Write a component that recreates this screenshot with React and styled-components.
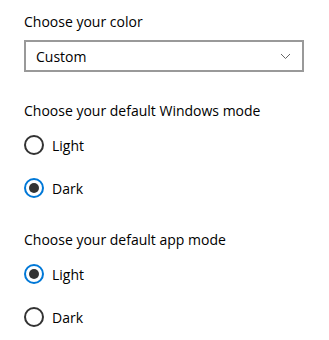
import React, { useState } from "react";
import styled, { createGlobalStyle } from "styled-components";

const Global = createGlobalStyle`
  html, body { margin: 0; padding: 0; background: #fff; }
  body { font-family: "Open Sans", "Noto Sans", sans-serif; color: #000; }
`;

const Page = styled.div`
  width: 329px;
  height: 340px;
  box-sizing: border-box;
  padding: 12px 0 0 24px;
  display: flex;
  flex-direction: column;
`;

const Heading = styled.div`
  font-size: 14px;
  line-height: 20px;
  margin-top: ${(p) => p.$mt || 0}px;
`;

const Select = styled.div`
  margin-top: 8px;
  width: 280px;
  height: 32px;
  box-sizing: border-box;
  border: 2px solid #999;
  display: flex;
  align-items: center;
  justify-content: space-between;
  padding: 0 11px 0 10px;
  font-size: 14px;
`;

const Chevron = () => (
  <svg width="11" height="7" viewBox="0 0 11 7">
    <path d="M1 1 L5.5 5.5 L10 1" fill="none" stroke="#666" strokeWidth="1" />
  </svg>
);

const Group = styled.div`
  display: flex;
  flex-direction: column;
  gap: 23px;
  margin-top: 14px;
`;

const Row = styled.label`
  display: flex;
  align-items: center;
  height: 20px;
  gap: 8px;
  font-size: 14px;
  cursor: pointer;
`;

const Circle = styled.span`
  width: 20px;
  height: 20px;
  box-sizing: border-box;
  border-radius: 50%;
  border: 2px solid ${(p) => (p.$on ? "#0078d7" : "#333")};
  display: flex;
  align-items: center;
  justify-content: center;
  &::after {
    content: "";
    width: 10px;
    height: 10px;
    border-radius: 50%;
    background: #333;
    display: ${(p) => (p.$on ? "block" : "none")};
  }
`;

const RadioGroup = ({ options, value, onChange }) => (
  <Group>
    {options.map((o) => (
      <Row key={o} onClick={() => onChange(o)}>
        <Circle $on={o === value} />
        <span>{o}</span>
      </Row>
    ))}
  </Group>
);

export default function App() {
  const [win, setWin] = useState("Dark");
  const [app, setApp] = useState("Light");
  return (
    <>
      <Global />
      <Page>
        <Heading>Choose your color</Heading>
        <Select>
          <span>Custom</span>
          <Chevron />
        </Select>
        <Heading $mt={29}>Choose your default Windows mode</Heading>
        <RadioGroup options={["Light", "Dark"]} value={win} onChange={setWin} />
        <Heading $mt={32}>Choose your default app mode</Heading>
        <RadioGroup options={["Light", "Dark"]} value={app} onChange={setApp} />
      </Page>
    </>
  );
}
